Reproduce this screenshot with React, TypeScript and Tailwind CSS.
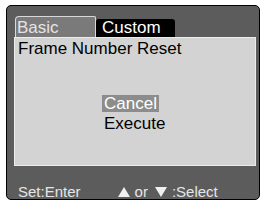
import React from 'react'

function TriUp() {
  return (
    <svg width="12" height="10" viewBox="0 0 12 10" className="block">
      <polygon points="6,0 12,10 0,10" fill="#f0f0f0" />
    </svg>
  )
}

function TriDown() {
  return (
    <svg width="12" height="10" viewBox="0 0 12 10" className="block">
      <polygon points="0,0 12,0 6,10" fill="#f0f0f0" />
    </svg>
  )
}

export default function App() {
  return (
    <div className="w-[265px] h-[203px] bg-white pl-[6px] pt-[5px] overflow-hidden" style={{ fontFamily: '"Liberation Sans", Arial, sans-serif' }}>
      <div className="w-[254px] h-[195px] bg-[#5c5c5c] border border-black rounded-[5px] pl-[7px] pr-[3px] pt-[10px] flex flex-col">
        {/* tabs */}
        <div className="flex items-end h-[21px] pl-[1px]">
          <div className="w-[81px] h-[21px] bg-[#7a7a7a] border-t border-l border-r border-[#d8d8d8] rounded-tl-[4px] rounded-tr-[2px] text-[17px] leading-[17px] text-[#e4e4e4] pl-[1px] pt-[2px]">
            Basic
          </div>
          <div className="w-[79px] h-[18px] bg-black rounded-t-[3px] text-[17px] leading-[17px] text-white pl-[6px]">
            Custom
          </div>
        </div>

        {/* panel */}
        <div className="w-[242px] h-[129px] bg-[#d3d3d3] border border-[#ececec] flex flex-col pl-[3px] pt-[2px]">
          <div className="text-[17px] leading-[17px] text-black">Frame Number Reset</div>
          <div className="flex flex-col items-start pl-[84px] mt-[38px]">
            <div className="h-[17px] bg-[#8c8c8c] px-[2px] text-[17px] leading-[17px] text-white">Cancel</div>
            <div className="mt-[3px] pl-[2px] text-[17px] leading-[17px] text-black">Execute</div>
          </div>
        </div>

        {/* help bar */}
        <div className="flex items-end mt-[18px] pl-[4px] text-[15px] leading-[15px] text-[#e6e6e6]">
          <span>Set:Enter</span>
          <span className="ml-[37px] mb-[2px]"><TriUp /></span>
          <span className="ml-[5px]">or</span>
          <span className="ml-[7px] mb-[2px]"><TriDown /></span>
          <span className="ml-[5px]">:Select</span>
        </div>
      </div>
    </div>
  )
}
